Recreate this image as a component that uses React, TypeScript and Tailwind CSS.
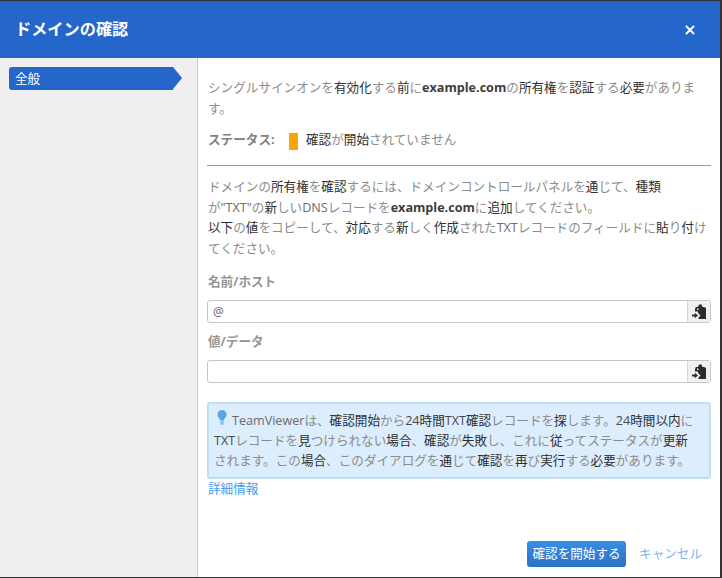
import React from "react";

const Tone = ({ t }: { t: string }) => (
  <>
    {t.split(/([\u4e00-\u9fff]+)/).map((s, i) =>
      i % 2 === 1 ? (
        <span key={i} className="text-[#2f2f2f]">{s}</span>
      ) : (
        <span key={i} className="text-[#8c8c8c]">{s}</span>
      )
    )}
  </>
);

const Clip = () => (
  <svg viewBox="0 0 14 15" className="mr-[1px] h-[15px] w-[14px]">
    <path fill="#2b2b2b" d="M3 3h3l1-2.500h2.500L10.500 3H14v12H6.500v-1.500L8.500 11.500 6 9V7.500H3z" />
    <path fill="#c49a5e" d="M3 3h1v1.500H3zM12.500 3H14v1h-1.500z" />
    <path fill="#f0f0f0" d="M5 4.500h1.500v1.500H5z" />
    <path fill="#2b2b2b" d="M0 10.500h2.800V8.700L6 11.500l-3.200 2.800v-1.800H0z" />
  </svg>
);

const Field = ({ value }: { value?: string }) => (
  <div className="flex h-[23px] w-[504px] rounded-[3px] border border-[#c6c6c6] bg-white">
    <div className="flex-1 pl-[5px] text-[12px] leading-[21px] text-[#666]">{value}</div>
    <div className="flex w-[23px] items-center justify-center border-l border-[#d8d8d8] bg-[#f0f0f0]"><Clip /></div>
  </div>
);

export default function App() {
  return (
    <div
      className="flex h-[578px] w-[722px] flex-col overflow-hidden border-t border-r-2 border-b border-[#333333] bg-white text-[12.6px] leading-[20.7px] text-[#8c8c8c]"
      style={{ fontFamily: '"Open Sans","Noto Sans CJK JP",sans-serif' }}
    >
      <header className="flex h-[57px] shrink-0 items-center justify-between bg-[#2566cb] pl-[15px] pr-[25px] text-white">
        <h1 className="text-[16.2px] font-bold">ドメインの確認</h1>
        <svg viewBox="0 0 10 10" className="mt-[1px] h-[10px] w-[10px]"><path d="M1 1l8 8M9 1l-8 8" stroke="#fff" strokeWidth="2" /></svg>
      </header>
      <div className="flex min-h-0 flex-1">
        <aside className="w-[198px] shrink-0 border-r border-[#c9c9c9] bg-[#efefef] pl-[9px] pt-[9px]">
          <div className="relative h-[23px] w-[164px] rounded-l-[3px] bg-[#2566cb] pl-[6px] text-[12.6px] leading-[24px] text-white">
            全般
            <span className="absolute left-[164px] top-0 h-0 w-0 border-y-[11.5px] border-l-[9px] border-y-transparent border-l-[#2566cb]" />
          </div>
        </aside>
        <main className="flex min-w-0 flex-1 flex-col pl-[9px] pr-[9px] pt-[20px]">
          <p className="pl-[1px]"><Tone t="シングルサインオンを有効化する前に" /><b className="text-[#3d3d3d]">example.com</b><Tone t="の所有権を認証する必要があります。" /></p>
          <div className="mt-[10.6px] flex h-[21px] items-center pl-[1px]">
            <b className="w-[81px] text-[#808080]">ステータス:</b>
            <span className="mt-[2px] h-[17px] w-[9px] bg-[#f9a602]" />
            <span className="ml-2"><Tone t="確認が開始されていません" /></span>
          </div>
          <hr className="mb-[11px] mt-[14px] border-t border-[#999]" />
          <p className="pl-[1px]">
            <Tone t="ドメインの所有権を確認するには、ドメインコントロールパネルを通じて、種類が" /><span className="text-[#6b6b6b]">"TXT"</span><Tone t="の新しい" /><span className="text-[#6b6b6b]">DNS</span><Tone t="レコードを" /><b className="text-[#3d3d3d]">example.com</b><Tone t="に追加してください。" /><br />
            <Tone t="以下の値をコピーして、対応する新しく作成された" /><span className="text-[#6b6b6b]">TXT</span><Tone t="レコードのフィールドに貼り付けてください。" />
          </p>
          <div className="mb-[8px] mt-[11px] h-[21px] pl-[1px] font-bold leading-[21px] text-[#959595]">名前/ホスト</div>
          <Field value="@" />
          <div className="mb-[8px] mt-[8px] h-[21px] pl-[1px] font-bold leading-[21px] text-[#959595]">値/データ</div>
          <Field />
          <div className="mt-[19px] w-[504px] rounded-[3px] border-2 border-[#bfdff5] bg-[#dcedfd] pb-[6px] pl-[5px] pr-[14px] pt-[7px] leading-[20px]">
            <svg viewBox="0 0 10 15" className="ml-[3px] mr-[5px] mt-[-8px] inline-block h-[15px] w-[10px]"><path fill="#5ba6e0" d="M5 0a4.600 4.600 0 0 1 3 8c-.7.8-1 1.400-1 2.500H3c0-1.100-.3-1.700-1-2.500a4.600 4.600 0 0 1 3-8z" /><path fill="#5ba6e0" d="M3 11.500h4v1H3zM3.500 13.200h3V14.500h-3z" /></svg>
            <span className="text-[#6b6b6b]">TeamViewer</span><Tone t="は、確認開始から" /><span className="text-[#4a4a4a]">24</span><Tone t="時間" /><span className="text-[#4a4a4a]">TXT</span><Tone t="確認レコードを探します。" /><span className="text-[#4a4a4a]">24</span><Tone t="時間以内に" /><span className="text-[#4a4a4a]">TXT</span><Tone t="レコードを見つけられない場合、確認が失敗し、これに従ってステータスが更新されます。この場合、このダイアログを通じて確認を再び実行する必要があります。" />
          </div>
          <a className="pl-[1px] text-[#3b9bf0]">詳細情報</a>
          <div className="mt-auto flex items-center justify-end pb-[10px] pr-[9px]">
            <button className="h-[26px] w-[99px] rounded-[3px] bg-gradient-to-b from-[#3a8de6] to-[#2a72c4] text-[12.6px] text-white">確認を開始する</button>
            <a className="ml-[13px] text-[#77b4f2]">キャンセル</a>
          </div>
        </main>
      </div>
    </div>
  );
}
